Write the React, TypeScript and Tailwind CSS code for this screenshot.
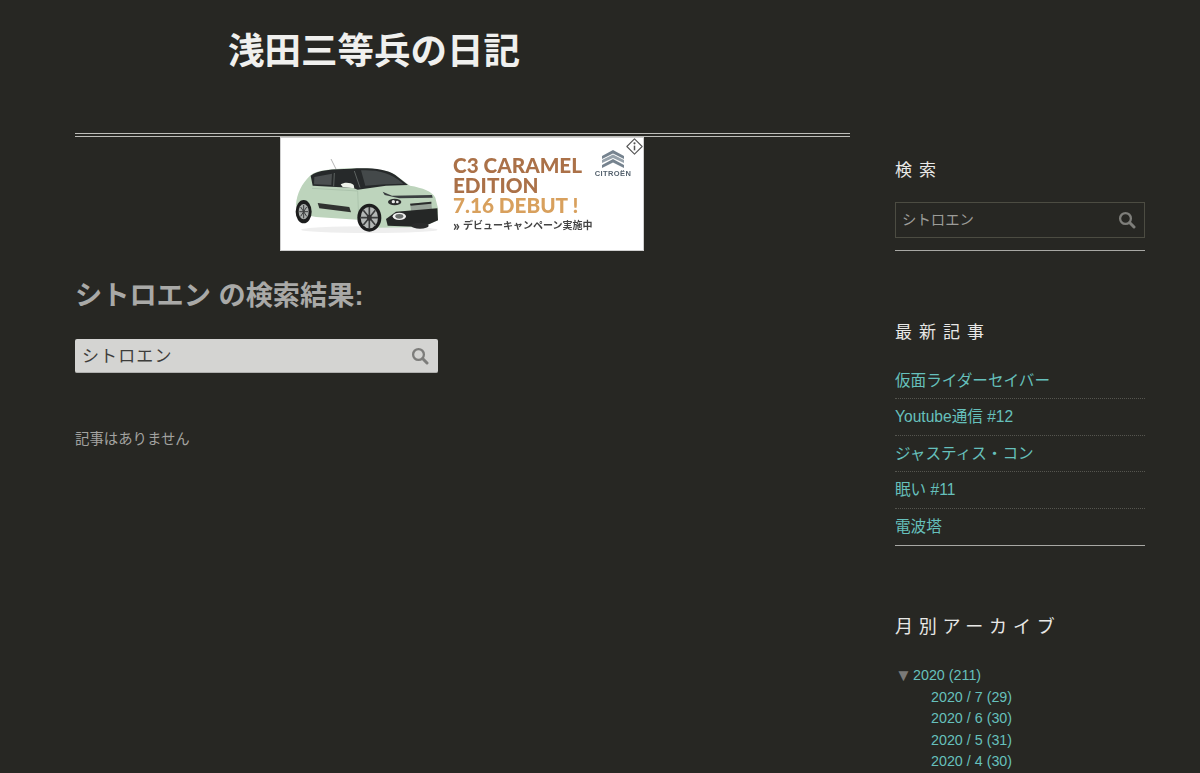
import React from 'react';

const recent = ['仮面ライダーセイバー', 'Youtube通信 #12', 'ジャスティス・コン', '眠い #11', '電波塔'];
const months = ['2020 / 7 (29)', '2020 / 6 (30)', '2020 / 5 (31)', '2020 / 4 (30)'];

const SearchIcon = ({ className }: { className: string }) => (
  <svg viewBox="0 0 18 18" className={className} fill="none" stroke="currentColor">
    <circle cx="7.5" cy="7.5" r="5.4" strokeWidth="2.3" />
    <path d="M11.8 11.8 L16 16" strokeWidth="3" strokeLinecap="round" />
  </svg>
);

const CarDrawing = () => (
  <svg viewBox="0 0 480 255" className="w-[160px] h-[85px] blur-[0.6px]">
    {/* shadow */}
    <ellipse cx="250" cy="224" rx="205" ry="10" fill="#eeeeee" />
    {/* antenna */}
    <path d="M135 12 L150 42" stroke="#b5b5b5" strokeWidth="3" />
    {/* body */}
    <path d="M30 150 C32 115 48 85 72 62 C90 46 130 42 190 40 C250 38 300 42 325 58 L372 92 C410 98 440 110 448 128 L456 160 L456 196 L410 216 L280 218 L215 194 L90 186 L40 176 Z" fill="#bdd4bc" />
    {/* roof and windows */}
    <path d="M74 62 C95 44 140 42 195 41 C255 38 300 42 328 60 L366 90 L300 92 L215 104 L200 98 L150 96 L80 92 Z" fill="#26292a" />
    <path d="M145 54 L143 94 M205 48 L222 98" stroke="#5d6361" strokeWidth="3" />
    <path d="M225 46 C270 44 310 50 352 86 L298 88 L238 92 Z" fill="#44494a" />
    <path d="M85 66 L138 56 L136 90 L84 88 Z" fill="#4b4f50" />
    {/* mirror */}
    <path d="M164 88 C175 80 195 82 203 90 L205 100 L170 96 Z" fill="#eef3ea" />
    {/* door line */}
    <path d="M78 100 L215 108 L218 188" stroke="#a3bba4" strokeWidth="2" fill="none" />
    {/* airbump */}
    <path d="M95 144 L190 156 L195 172 L100 160 Z" fill="#303230" />
    {/* hood lights and chevron bar */}
    <path d="M290 110 L318 122 L438 120 L440 128 L340 130 L296 120 Z" fill="#3a3e40" />
    <ellipse cx="326" cy="141" rx="20" ry="10" fill="#2b2d2d" />
    <circle cx="322" cy="140" r="5" fill="#e8e8e8" />
    <circle cx="334" cy="141" r="4" fill="#e8e8e8" />
    {/* grille */}
    <path d="M372 146 L436 140 L438 166 L376 172 Z" fill="#98a399" />
    <path d="M372 146 L436 140 L436 146 L374 152 Z" fill="#2a2c2c" />
    {/* lower bumper */}
    <path d="M300 192 L330 170 L454 160 L456 196 L410 216 L305 212 Z" fill="#252726" />
    <ellipse cx="340" cy="184" rx="20" ry="11" fill="#f0f0f0" />
    <ellipse cx="340" cy="184" rx="12" ry="7" fill="#6a6e6c" />
    {/* wheels */}
    <ellipse cx="53" cy="170" rx="24" ry="35" fill="#1c1d1d" />
    <ellipse cx="53" cy="170" rx="15" ry="23" fill="#a9adab" />
    <path d="M53 150 V190 M40 170 H66 M44 156 L62 184 M62 156 L44 184" stroke="#3b3d3d" strokeWidth="3" />
    <ellipse cx="250" cy="188" rx="36" ry="42" fill="#1c1d1d" />
    <ellipse cx="250" cy="188" rx="26" ry="32" fill="#b3b7b5" />
    <path d="M250 156 V220 M224 188 H276 M232 166 L268 210 M268 166 L232 210" stroke="#3b3d3d" strokeWidth="5" />
    <ellipse cx="250" cy="188" rx="7" ry="9" fill="#333" />
    <ellipse cx="402" cy="212" rx="26" ry="9" fill="#2a2b2b" />
  </svg>
);

const CitroenLogo = () => (
  <div className="flex flex-col items-center w-[38px]">
    <svg viewBox="0 0 22 18" className="w-[22px] h-[18px] blur-[0.3px]">
      <path d="M11 0 L22 6 V9 L11 3.5 L0 9 V6 Z" fill="#76838f" />
      <path d="M11 4.5 L22 10 V13 L11 8 L0 13 V10 Z" fill="#97a2ab" />
      <path d="M11 9 L22 15 V18 L11 12.5 L0 18 V15 Z" fill="#76838f" />
    </svg>
    <span className="mt-[2px] text-[7.5px] leading-[8px] font-bold text-[#55626e] tracking-[0.4px] blur-[0.2px]">CITROËN</span>
  </div>
);

const AdBanner = () => (
  <div className="relative w-[364px] h-[114px] ml-[205px] bg-white border border-[#cfcfcf] overflow-hidden flex">
    <div className="pl-[5px] pt-[17px] w-[172px] shrink-0">
      <CarDrawing />
    </div>
    <div className="pt-[17px] w-[141px] shrink-0 font-['Lato','Noto_Sans_CJK_JP',sans-serif]">
      <div className="text-[20.7px] leading-[20px] font-black text-[#ab7148] whitespace-nowrap blur-[0.4px]">
        C3 CARAMEL
        <br />
        EDITION
      </div>
      <div className="text-[20.7px] leading-[20px] font-black text-[#d8a05d] whitespace-nowrap blur-[0.4px]">7.16 DEBUT !</div>
      <div className="mt-[3px] text-[10px] leading-[14px] font-bold text-[#444] whitespace-nowrap blur-[0.3px] flex items-center gap-[3px]">
        <span className="text-[15px] leading-[14px] font-black">»</span>
        <span>デビューキャンペーン実施中</span>
      </div>
    </div>
    <div className="pt-[12px]">
      <CitroenLogo />
    </div>
    <div className="absolute top-0 right-0 w-[17px] h-[17px] flex items-center justify-center bg-white">
      <svg viewBox="0 0 16 16" className="w-[17px] h-[17px]">
        <path d="M8 0.8 L15.2 8 L8 15.2 L0.8 8 Z" fill="none" stroke="#555" strokeWidth="1" strokeLinejoin="round" />
        <circle cx="8" cy="5" r="1" fill="#555" />
        <path d="M8 7.2 V11.6" stroke="#555" strokeWidth="1.4" />
      </svg>
    </div>
  </div>
);

export default function App() {
  return (
    <div className="h-[773px] overflow-hidden bg-[#272723] flex pl-[75px] font-['Liberation_Sans','Noto_Sans_CJK_JP',sans-serif]">
      <main className="w-[775px] shrink-0">
        <header className="h-[133px] pt-[26px] pl-[153px]">
          <h1 className="text-[36.5px] leading-[52px] font-bold text-[#f0f0ee]">浅田三等兵の日記</h1>
        </header>
        <div className="h-[4px] border-y border-[#bdbdb9]" />
        <AdBanner />
        <h2 className="mt-[27px] text-[27.2px] leading-[36px] font-bold text-[#a9a9a7]">シトロエン の検索結果:</h2>
        <div className="mt-[25px] w-[363px] h-[34px] rounded-[2px] bg-[#d4d4d2] border-b border-[#b0b0ae] flex items-center justify-between pl-[7px] pr-[9px]">
          <span className="pt-[2px] text-[17px] tracking-[1.1px] text-[#3d3d3b]">シトロエン</span>
          <SearchIcon className="w-[18px] h-[18px] text-[#7d7d7b]" />
        </div>
        <p className="mt-[56px] text-[14.4px] leading-[20px] text-[#a3a3a0]">記事はありません</p>
      </main>

      <aside className="ml-[45px] w-[250px] shrink-0 pt-[159px]">
        <h3 className="text-[17px] leading-[24px] tracking-[7px] text-[#e8e8e6]">検索</h3>
        <div className="mt-[19px] h-[36px] border border-[#4c4c42] flex items-center justify-between pl-[6px] pr-[8px]">
          <span className="pt-[2px] text-[14.4px] text-[#9c9c98]">シトロエン</span>
          <SearchIcon className="w-[18px] h-[18px] text-[#7e7e7a]" />
        </div>
        <div className="mt-[12px] border-t border-[#a8a8a4]" />

        <h3 className="mt-[70px] text-[17px] leading-[24px] tracking-[7px] text-[#e8e8e6]">最新記事</h3>
        <ul className="mt-[18px] border-b border-[#a8a8a4]">
          {recent.map((title, i) => (
            <li
              key={title}
              className={`h-[36.4px] flex items-center text-[15.6px] text-[#66c0bc] ${i < recent.length - 1 ? 'border-b border-dotted border-[#55554f]' : ''}`}
            >
              {title}
            </li>
          ))}
        </ul>

        <h3 className="mt-[68px] text-[18px] leading-[26px] tracking-[5.8px] text-[#e8e8e6]">月別アーカイブ</h3>
        <div className="mt-[25px] text-[14.3px] leading-[21.6px] text-[#66c0bc]">
          <div className="flex items-center">
            <span className="w-[18px] text-[17px] leading-[21px] text-[#7a7a78]">▼</span>
            <span>2020 (211)</span>
          </div>
          {months.map(m => (
            <div key={m} className="pl-[36px]">{m}</div>
          ))}
        </div>
      </aside>
    </div>
  );
}
